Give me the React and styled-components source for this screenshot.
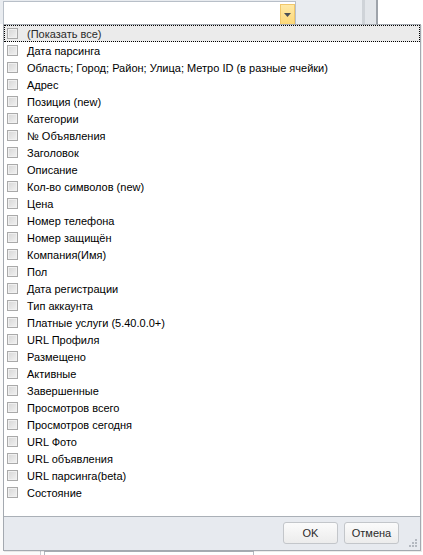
import React from 'react';
import styled, { createGlobalStyle } from 'styled-components';

const GlobalStyle = createGlobalStyle`
  html, body {
    margin: 0;
    padding: 0;
    background: #ffffff;
  }
  body {
    font-family: 'Liberation Sans', Arial, sans-serif;
    font-size: 11px;
    color: #000;
  }
`;

const FIELDS = [
  '(Показать все)',
  'Дата парсинга',
  'Область; Город; Район; Улица; Метро ID (в разные ячейки)',
  'Адрес',
  'Позиция (new)',
  'Категории',
  '№ Объявления',
  'Заголовок',
  'Описание',
  'Кол-во символов (new)',
  'Цена',
  'Номер телефона',
  'Номер защищён',
  'Компания(Имя)',
  'Пол',
  'Дата регистрации',
  'Тип аккаунта',
  'Платные услуги (5.40.0.0+)',
  'URL Профиля',
  'Размещено',
  'Активные',
  'Завершенные',
  'Просмотров всего',
  'Просмотров сегодня',
  'URL Фото',
  'URL объявления',
  'URL парсинга(beta)',
  'Состояние',
];

const Screen = styled.div`
  position: relative;
  width: 423px;
  height: 555px;
  overflow: hidden;
  background: #ffffff;
`;

/* ---------- background editor (behind the popup) ---------- */

const EditorBar = styled.div`
  display: flex;
  height: 24px;
  background: #e9ecf0;
`;

const ComboField = styled.div`
  display: flex;
  justify-content: flex-end;
  margin: 1px 0 0 3px;
  width: 293px;
  height: 23px;
  box-sizing: border-box;
  background: #ffffff;
  border: 1px solid #b8bfc8;
  border-bottom: none;
`;

const DropButton = styled.div`
  display: flex;
  align-items: center;
  justify-content: center;
  width: 15px;
  margin-top: 2px;
  box-sizing: border-box;
  background: linear-gradient(#ffe9a6, #fdd878);
  border: 1px solid #f1c76a;
  border-bottom: none;
  svg {
    display: block;
  }
`;

const Gutter = styled.div`
  flex: 0 0 66px;
`;

const SplitLines = styled.div`
  flex: 0 0 16px;
  background: #e3e6ea;
  border-left: 3px solid #cfd3d8;
  border-right: 2px solid #9ea3aa;
  box-sizing: border-box;
`;

const SidePanel = styled.div`
  flex: 1;
  background: #ffffff;
`;

const GridArea = styled.div`
  display: flex;
  height: 531px;
`;

const RowHeaderColumn = styled.div`
  flex: 0 0 40px;
  border-right: 1px solid #c9ccd1;
  background: #fbfbfb;
`;

const GridBody = styled.div`
  flex: 1;
  display: flex;
  align-items: flex-end;
  padding-left: 3px;
`;

const GridCell = styled.div`
  width: 208px;
  height: 3px;
  border: 1px solid #b5bac1;
  border-bottom: none;
`;

/* ---------- popup ---------- */

const Popup = styled.div`
  position: absolute;
  left: 3px;
  top: 24px;
  width: 418px;
  height: 527px;
  box-sizing: border-box;
  display: flex;
  flex-direction: column;
  background: #ffffff;
  border: 1px solid #a4a9b0;
  box-shadow: 1px 1px 0 rgba(0, 0, 0, 0.08);
`;

const List = styled.div`
  flex: 1;
  display: flex;
  flex-direction: column;
`;

const Row = styled.div`
  display: flex;
  align-items: center;
  height: 17px;
  box-sizing: border-box;
  padding-left: ${({ $focused }) => ($focused ? '2px' : '3px')};
  gap: 9px;
  background: ${({ $focused }) => ($focused ? '#ebebeb' : 'transparent')};
  border: ${({ $focused }) => ($focused ? '1px dotted #000' : 'none')};
  white-space: nowrap;
  color: ${({ $focused }) => ($focused ? '#2a2a2a' : '#000')};
`;

const CheckBox = styled.span`
  flex: 0 0 auto;
  width: 11px;
  height: 11px;
  box-sizing: border-box;
  border: 1px solid #a9a9a9;
  background: linear-gradient(135deg, #d6d6d6, #f2f2f2);
  box-shadow: inset 0 0 0 1px #f0f0f0;
`;

const Label = styled.span`
  font-family: 'Liberation Sans', Arial, sans-serif;
  font-size: 11px;
  line-height: 13px;
  margin-top: 1px;
`;

const Footer = styled.div`
  position: relative;
  flex: 0 0 34px;
  box-sizing: border-box;
  display: flex;
  justify-content: flex-end;
  align-items: flex-start;
  gap: 6px;
  padding: 5px 21px 0 0;
  background: #e7eaef;
  border-top: 1px solid #aab0b7;
`;

const Button = styled.button`
  width: 55px;
  height: 22px;
  padding: 0;
  box-sizing: border-box;
  font-family: 'Liberation Sans', Arial, sans-serif;
  font-size: 11px;
  color: #2b2b2b;
  background: linear-gradient(#fbfbfb, #ececec);
  border: 1px solid #c3c6ca;
  border-radius: 3px;
`;

const Grip = styled.svg`
  position: absolute;
  right: 2px;
  bottom: 2px;
`;

const ArrowDown = () => (
  <svg width="7" height="4" viewBox="0 0 7 4">
    <path d="M0 0h7L3.5 4z" fill="#4a4f55" />
  </svg>
);

const ResizeGrip = () => (
  <Grip width="10" height="10" viewBox="0 0 10 10">
    {[
      [7, 1],
      [4, 4],
      [7, 4],
      [1, 7],
      [4, 7],
      [7, 7],
    ].map(([x, y]) => (
      <rect key={`${x}-${y}`} x={x} y={y} width="2" height="2" fill="#b4b9c0" />
    ))}
  </Grip>
);

const App = () => (
  <>
    <GlobalStyle />
    <Screen>
      <EditorBar>
        <ComboField>
          <DropButton>
            <ArrowDown />
          </DropButton>
        </ComboField>
        <Gutter />
        <SplitLines />
        <SidePanel />
      </EditorBar>
      <GridArea>
        <RowHeaderColumn />
        <GridBody>
          <GridCell />
        </GridBody>
      </GridArea>

      <Popup>
        <List>
          {FIELDS.map((name, i) => (
            <Row key={name} $focused={i === 0}>
              <CheckBox />
              <Label>{name}</Label>
            </Row>
          ))}
        </List>
        <Footer>
          <Button>OK</Button>
          <Button>Отмена</Button>
          <ResizeGrip />
        </Footer>
      </Popup>
    </Screen>
  </>
);

export default App;
